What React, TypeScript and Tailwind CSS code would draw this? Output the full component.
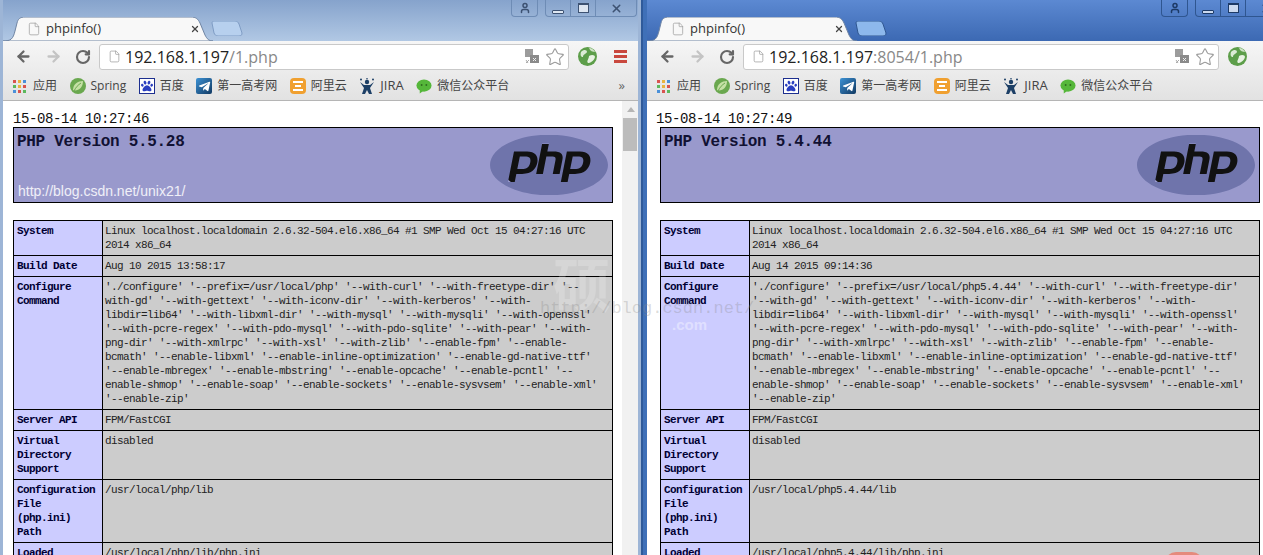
import { ArrowLeft, ArrowRight, RotateCw, File, Star, User, X } from "lucide-react";
import { FaPaw, FaTelegramPlane } from "react-icons/fa";
import { SiPhp } from "react-icons/si";

const uiFont = "font-['Open_Sans','Noto_Sans_CJK_SC',sans-serif]";
const monoFont = "font-['Liberation_Mono','Noto_Sans_CJK_SC',monospace]";

function configureLines(prefix: string, first: string) {
  return [
    `'./configure' '--prefix=${prefix}' '--with-curl' '--with-freetype-dir'${first}`,
    `${first ? "with-gd'" : "'--with-gd'"} '--with-gettext' '--with-iconv-dir' '--with-kerberos' '--with-`,
    "libdir=lib64' '--with-libxml-dir' '--with-mysql' '--with-mysqli' '--with-openssl'",
    "'--with-pcre-regex' '--with-pdo-mysql' '--with-pdo-sqlite' '--with-pear' '--with-",
    "png-dir' '--with-xmlrpc' '--with-xsl' '--with-zlib' '--enable-fpm' '--enable-",
    "bcmath' '--enable-libxml' '--enable-inline-optimization' '--enable-gd-native-ttf'",
    "'--enable-mbregex' '--enable-mbstring' '--enable-opcache' '--enable-pcntl' '--",
    "enable-shmop' '--enable-soap' '--enable-sockets' '--enable-sysvsem' '--enable-xml'",
    "'--enable-zip'",
  ];
}

function AppsIcon() {
  const colors = ["#d9534f", "#e8b33f", "#4a90d9", "#5cb85c", "#e8b33f", "#d9534f", "#4a90d9", "#d9534f", "#5cb85c"];
  return (
    <div className="grid h-[13px] w-[13px] grid-cols-3 gap-[2px]">
      {colors.map((c, i) => (
        <div key={i} style={{ backgroundColor: c }} />
      ))}
    </div>
  );
}

function SpringIcon() {
  return (
    <svg width="16" height="16" viewBox="0 0 16 16">
      <circle cx="8" cy="8" r="8" fill="#6aa84f" />
      <path d="M3 12C3 6 8 3 13 3C13 9 9 13 4 12.5Z" fill="#c5e0a5" />
      <path d="M4 13C6 9 8 7 11 5" stroke="#6aa84f" strokeWidth="1" fill="none" />
    </svg>
  );
}

function PawIcon() {
  return (
    <div className="flex h-[16px] w-[16px] items-center justify-center border border-[#1d2f8f] bg-white">
      <FaPaw className="h-[12px] w-[12px] text-[#2a3fc0]" />
    </div>
  );
}

function TelegramIcon() {
  return (
    <div className="flex h-[16px] w-[16px] items-center justify-center rounded-[2px] bg-gradient-to-br from-[#3d93d6] to-[#123a63]">
      <FaTelegramPlane className="h-[13px] w-[13px] text-white" />
    </div>
  );
}

function AliyunIcon() {
  return (
    <div className="flex h-[16px] w-[16px] flex-col items-center justify-center gap-[2px] rounded-[4px] bg-[#f0a030]">
      <div className="h-[2px] w-[10px] bg-white" />
      <div className="h-[2px] w-[6px] bg-white" />
      <div className="h-[2px] w-[10px] bg-white" />
    </div>
  );
}

function JiraIcon() {
  return (
    <svg width="16" height="16" viewBox="0 0 16 16">
      <circle cx="8" cy="4" r="2.2" fill="#1c3f66" />
      <path d="M1 4L5 7H11L15 4L11 10L13 16H10L8 12L6 16H3L5 10Z" fill="#1c3f66" />
      <circle cx="2" cy="1.5" r="1" fill="#1c3f66" />
      <circle cx="14" cy="1.5" r="1" fill="#1c3f66" />
      <circle cx="8" cy="0.8" r="0.8" fill="#1c3f66" />
    </svg>
  );
}

function WechatIcon() {
  return (
    <svg width="17" height="16" viewBox="0 0 17 16">
      <ellipse cx="8.5" cy="7.5" rx="8" ry="6.5" fill="#55b73a" />
      <path d="M4 12L4 16L8 13Z" fill="#55b73a" />
      <circle cx="6" cy="7" r="1" fill="#2f6b1f" />
      <circle cx="11" cy="7" r="1" fill="#2f6b1f" />
    </svg>
  );
}

function TranslateIcon() {
  return (
    <svg width="14" height="15" viewBox="0 0 14 15">
      <rect x="0" y="0" width="8" height="8" fill="#9c9c9c" />
      <rect x="5" y="6" width="9" height="8" fill="#8a8a8a" />
      <path d="M8 9L11 12M11 9L8 12" stroke="#eee" strokeWidth="1" />
      <path d="M1 11L3 14M4 11L1 14" stroke="#aaa" strokeWidth="1" />
    </svg>
  );
}

function GlobeIcon() {
  return (
    <svg width="19" height="19" viewBox="0 0 19 19">
      <circle cx="9.5" cy="9.5" r="9.5" fill="#5d9e4a" />
      <path d="M3 5C6 2 9 3 9 5C8 7 5 7 5 10C3 10 2 8 3 5Z" fill="#dcebd5" />
      <path d="M11 9C14 7 17 8 17 10C16 14 12 16 10 16C8 14 11 12 11 9Z" fill="#e8f2e3" />
      <path d="M11 1C14 1 16 3 17 5C15 5 12 4 11 1Z" fill="#cfe3c6" />
    </svg>
  );
}

function Bookmark({
  icon,
  label,
  labelClass,
}: {
  icon: React.ReactNode;
  label: string;
  labelClass?: string;
}) {
  return (
    <div className="flex shrink-0 items-center gap-[5px]">
      <div className="flex w-[16px] justify-center">{icon}</div>
      <span className={`whitespace-nowrap ${labelClass ?? ""}`}>{label}</span>
    </div>
  );
}

function BrowserChrome({
  active,
  host,
  path,
}: {
  active: boolean;
  host: string;
  path: string;
}) {
  const iconTone = active ? "text-[#1d3a66]" : "text-[#3d5272]";
  const btnBorder = active ? "border-[#2f5690]" : "border-[#6e8cb5]";
  const glyphBorder = active ? "border-[#1d3a66] bg-white/70" : "border-[#3d5272] bg-white/70";
  return (
    <>
      <div
        className={`flex h-[41px] items-start justify-between ${
          active
            ? "bg-gradient-to-b from-[#5c89d2] to-[#3c69b3]"
            : "bg-gradient-to-b from-[#86a3cc] to-[#b1c8e4]"
        }`}
      >
        <div className="flex items-end pt-[17px]">
          <div className={`relative h-[24px] w-[210px] ${uiFont} text-[13px] text-[#333]`}>
            <svg className="absolute inset-0" width="210" height="24" viewBox="0 0 210 24">
              <path
                d="M0 24C8 24 10 22 12 14L14 6C15 2 17 0 22 0L188 0C193 0 195 2 197 6L202 18C204 22 206 24 210 24Z"
                fill="#f8f8f8"
                stroke="#6f84a3"
                strokeWidth="1"
              />
            </svg>
            <div className="relative flex h-full items-center pl-[24px]">
              <File className="h-[16px] w-[14px] text-[#999]" strokeWidth={1.2} />
              <span className="ml-[5px]">phpinfo()</span>
              <X className="ml-[89px] h-[10px] w-[10px] text-[#444]" strokeWidth={3} />
            </div>
          </div>
          <svg className="mb-[5px] -ml-[2px]" width="32" height="15" viewBox="0 0 32 15">
            <path
              d="M1 2C1 1 2 0 3 0L24 0C26 0 27 1 28 3L31 12C31 14 30 15 28 15L7 15C5 15 4 14 3 12Z"
              fill={active ? "#8db8ec" : "#b7d0ee"}
              stroke={active ? "#2f5690" : "#7f9cc4"}
            />
          </svg>
        </div>
        <div className={`flex pr-[1px] ${iconTone}`}>
          <div className={`flex h-[17px] w-[27px] items-center justify-center rounded-b-[4px] border border-t-0 ${btnBorder}`}>
            <User className="h-[12px] w-[12px]" strokeWidth={3} />
          </div>
          <div className={`ml-[7px] flex h-[17px] w-[92px] rounded-b-[4px] border border-t-0 ${btnBorder}`}>
            <div className={`flex w-[25px] items-end justify-center border-r pb-[2px] ${btnBorder}`}>
              <div className={`h-[4px] w-[12px] rounded-[1px] border ${glyphBorder}`} />
            </div>
            <div className={`flex w-[25px] items-center justify-center border-r ${btnBorder}`}>
              <div className={`h-[10px] w-[11px] border border-t-2 ${glyphBorder}`} />
            </div>
            <div className="flex flex-1 items-center justify-center">
              <X className="h-[13px] w-[13px]" strokeWidth={2.8} />
            </div>
          </div>
        </div>
      </div>

      <div className="border-b border-[#b5b5b5] bg-gradient-to-b from-[#f6f6f6] to-[#e2e2e2]">
        <div className="flex h-[31px] items-center pl-[12px]">
          <div className="flex shrink-0 items-center gap-[13px]">
            <ArrowLeft className="h-[17px] w-[17px] text-[#666]" strokeWidth={3.2} />
            <ArrowRight className="h-[17px] w-[17px] text-[#c4c4c4]" strokeWidth={3.2} />
            <RotateCw className="h-[16px] w-[16px] text-[#666]" strokeWidth={3.2} />
          </div>
          <div className={`ml-[8px] flex h-[26px] flex-1 items-center rounded-[3px] border border-[#c9c9c9] bg-white pl-[8px] pr-[3px] ${uiFont}`}>
            <File className="h-[17px] w-[13px] text-[#999]" strokeWidth={1.3} />
            <span className="ml-[4px] text-[16px] text-[#222]">
              {host}
              <span className="text-[#888]">{path}</span>
            </span>
            <div className="ml-auto flex items-center gap-[6px]">
              <TranslateIcon />
              <Star className="h-[20px] w-[20px] text-[#9a9a9a]" strokeWidth={1.3} />
            </div>
          </div>
          <div className="flex w-[69px] shrink-0 items-center pl-[9px]">
            <GlobeIcon />
            <div className="ml-[17px] flex w-[13px] flex-col gap-[2px]">
              <div className="h-[3px] bg-[#c9483e]" />
              <div className="h-[3px] bg-[#c9483e]" />
              <div className="h-[3px] bg-[#c9483e]" />
            </div>
          </div>
        </div>
        <div className={`flex h-[28px] items-center gap-[12.5px] pl-[10px] pr-[13px] text-[12px] text-[#444] ${uiFont}`}>
          <div className="flex shrink-0 items-center gap-[7px]">
            <AppsIcon />
            <span>应用</span>
          </div>
          <Bookmark icon={<SpringIcon />} label="Spring" />
          <Bookmark icon={<PawIcon />} label="百度" />
          <Bookmark icon={<TelegramIcon />} label="第一高考网" />
          <Bookmark icon={<AliyunIcon />} label="阿里云" />
          <Bookmark icon={<JiraIcon />} label="JIRA" labelClass="text-[13px]" />
          <Bookmark icon={<WechatIcon />} label="微信公众平台" />
          <span className="ml-auto text-[13px] text-[#666]">»</span>
        </div>
      </div>
    </>
  );
}

function PhpLogo() {
  return (
    <div className="relative mr-[4px] mt-[7px] h-[60px] w-[118px]">
      <div className="absolute inset-y-[9px] inset-x-[12px] rounded-full bg-[#111]" />
      <SiPhp
        className="absolute inset-0 h-[60px] w-[118px] text-[#6f74ab]"
        viewBox="0 5.75 24 12.5"
        preserveAspectRatio="none"
      />
    </div>
  );
}

function Row({ label, lines }: { label: string[]; lines: string[] }) {
  return (
    <tr>
      <td className="border border-black bg-[#ccccff] px-[3px] pb-[3px] pt-[3px] align-top font-bold text-[#000033]">
        {label.map((l) => (
          <div key={l}>{l}</div>
        ))}
      </td>
      <td className="border border-black bg-[#cccccc] px-[2px] pb-[3px] pt-[3px] align-top text-[#222]">
        {lines.map((l, i) => (
          <div key={i} className="whitespace-nowrap">
            {l}
          </div>
        ))}
      </td>
    </tr>
  );
}

function PhpInfo({
  time,
  version,
  url,
  root,
  pad,
  boxOffset,
  buildDate,
  configure,
}: {
  time: string;
  version: string;
  url?: string;
  root: string;
  pad: string;
  boxOffset: string;
  buildDate: string;
  configure: string[];
}) {
  return (
    <div className={`min-w-0 flex-1 bg-white pt-[10px] ${pad} ${monoFont}`}>
      <div className="h-[16px] text-[14px] leading-[16px] tracking-[-0.4px] text-[#111]">{time}</div>
      <div className={boxOffset}>
        <div className="flex h-[76px] w-[600px] justify-between border border-black bg-[#9999cc] pl-[3px]">
          <div className="flex flex-col justify-between">
            <div className="pt-[4px] text-[16px] font-bold leading-[20px] tracking-[-0.3px] text-[#111133]">
              PHP Version {version}
            </div>
            {url ? (
              <div className="pb-[3px] pl-[1px] font-['Liberation_Sans',sans-serif] text-[14px] leading-[16px] text-white/85">
                {url}
              </div>
            ) : null}
          </div>
          <PhpLogo />
        </div>
        <table className="mt-[17px] w-[600px] table-fixed border-collapse text-[11px] leading-[14px] tracking-[-0.6px]">
          <colgroup>
            <col className="w-[89px]" />
            <col />
          </colgroup>
          <tbody>
            <Row
              label={["System"]}
              lines={[
                "Linux localhost.localdomain 2.6.32-504.el6.x86_64 #1 SMP Wed Oct 15 04:27:16 UTC",
                "2014 x86_64",
              ]}
            />
            <Row label={["Build Date"]} lines={[buildDate]} />
            <Row label={["Configure", "Command"]} lines={configure} />
            <Row label={["Server API"]} lines={["FPM/FastCGI"]} />
            <Row label={["Virtual", "Directory", "Support"]} lines={["disabled"]} />
            <Row label={["Configuration", "File", "(php.ini)", "Path"]} lines={[`${root}/lib`]} />
            <Row label={["Loaded", "Configuration", "File"]} lines={[`${root}/lib/php.ini`]} />
          </tbody>
        </table>
      </div>
    </div>
  );
}

export default function App() {
  return (
    <div className="relative flex h-[555px] w-[1263px] overflow-hidden bg-[#2f5a9a]">
      <div className="flex h-full w-[641px] shrink-0 flex-col bg-[#9db5d6] px-[3px]">
        <BrowserChrome active={false} host="192.168.1.197" path="/1.php" />
        <div className="flex min-h-0 flex-1 overflow-hidden">
          <PhpInfo
            time="15-08-14 10:27:46"
            version="5.5.28"
            url="http://blog.csdn.net/unix21/"
            root="/usr/local/php"
            pad="pl-[10px]"
            boxOffset="ml-0"
            buildDate="Aug 10 2015 13:58:17"
            configure={configureLines("/usr/local/php", " '--")}
          />
          <div className="w-[16px] shrink-0 bg-[#f1f1f1] pl-[1px]">
            <div className="flex h-[17px] items-center justify-center">
              <div className="h-0 w-0 border-x-[4px] border-b-[5px] border-x-transparent border-b-[#b5b5b5]" />
            </div>
            <div className="h-[33px] w-[14px] bg-[#bcbcbc]" />
          </div>
        </div>
      </div>

      <div className="ml-[2px] h-full w-[649px] shrink-0 bg-[#3f70b8] px-[4px]">
        <div className="flex h-full flex-col">
          <BrowserChrome active host="192.168.1.197" path=":8054/1.php" />
          <div className="flex min-h-0 flex-1 overflow-hidden">
            <PhpInfo
              time="15-08-14 10:27:49"
              version="5.4.44"
              root="/usr/local/php5.4.44"
              pad="pl-[9px]"
              boxOffset="ml-[4px]"
              buildDate="Aug 14 2015 09:14:36"
              configure={configureLines("/usr/local/php5.4.44", "")}
            />
          </div>
        </div>
      </div>

      {/* watermark over both windows */}
      <div className="pointer-events-none absolute left-[553px] top-[250px] font-['Noto_Sans_CJK_SC',sans-serif] text-[58px] font-bold leading-[64px] text-white/20">
        硕
      </div>
      <div className="pointer-events-none absolute left-[540px] top-[300px] font-['Liberation_Mono',monospace] text-[17px] leading-[18px] text-[#888]/30">
        http://blog.csdn.net/
      </div>
      <div className="pointer-events-none absolute left-[672px] top-[316px] font-['Liberation_Sans',sans-serif] text-[15px] font-bold leading-[18px] text-white/40">
        .com
      </div>
      <div className="pointer-events-none absolute left-[1165px] top-[552px] h-[22px] w-[38px] rounded-full bg-[#e58a7c]" />
    </div>
  );
}
